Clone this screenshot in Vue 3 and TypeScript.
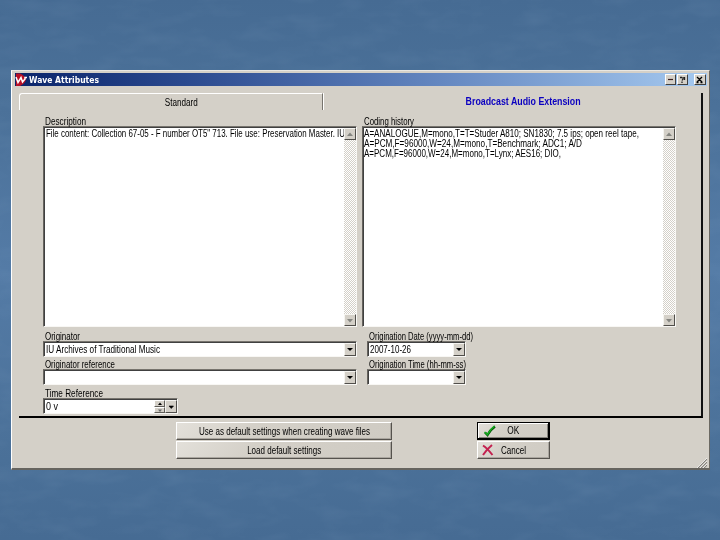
<script setup lang="ts">
import type { Directive } from 'vue'

// Condenses a label horizontally so that it occupies the given width.
const vFit: Directive<HTMLElement, number> = {
  mounted(el, binding) {
    const natural = el.getBoundingClientRect().width
    if (natural > 0) el.style.transform = `scaleX(${binding.value / natural})`
  },
}

interface Line { text: string; width: number }
interface Memo { id: string; label: string; labelWidth: number; lines: Line[] }

const memos: Memo[] = [
  {
    id: 'description', label: 'Description', labelWidth: 41,
    lines: [{ text: 'File content: Collection 67-05 - F number OT5" 713. File use: Preservation Master. IU', width: 299 }],
  },
  {
    id: 'history', label: 'Coding history', labelWidth: 50,
    lines: [
      { text: 'A=ANALOGUE,M=mono,T=T=Studer A810; SN1830; 7.5 ips; open reel tape,', width: 275 },
      { text: 'A=PCM,F=96000,W=24,M=mono,T=Benchmark; ADC1; A/D', width: 218 },
      { text: 'A=PCM,F=96000,W=24,M=mono,T=Lynx; AES16; DIO,', width: 197 },
    ],
  },
]

const rows = [
  [
    { label: 'Originator', labelWidth: 35, value: 'IU Archives of Traditional Music', width: 114 },
    { label: 'Origination Date (yyyy-mm-dd)', labelWidth: 104, value: '2007-10-26', width: 41 },
  ],
  [
    { label: 'Originator reference', labelWidth: 70, value: '', width: 0 },
    { label: 'Origination Time (hh-mm-ss)', labelWidth: 97, value: '', width: 0 },
  ],
]
</script>

<template>
  <div class="desktop">
    <svg class="texture" width="720" height="540">
      <filter id="grain" x="0" y="0" width="100%" height="100%">
        <feTurbulence type="fractalNoise" baseFrequency="0.025 0.06" numOctaves="3" seed="8" />
        <feColorMatrix values="0 0 0 0 0.7  0 0 0 0 0.85  0 0 0 0 1  0.65 0 0 0 -0.27" />
      </filter>
      <rect width="720" height="540" filter="url(#grain)" opacity="0.16" />
    </svg>
    <section class="window">
      <header class="titlebar">
        <svg class="logo" viewBox="0 0 12 13">
          <path d="M1 0.500H5Q10.500 3 11 6.500Q10.500 10 5 13H1Z" fill="#b80f25" />
          <path d="M1 4L3 9.500L6 4.500L7.500 9L10 6V4.500H12" fill="none" stroke="#fff" stroke-width="1.500" />
        </svg>
        <span class="title"><span v-fit="70" class="t">Wave Attributes</span></span>
        <button class="cap"><svg viewBox="0 0 9 9"><path d="M2 4.500H7" stroke="#3c2020" stroke-width="1.200" /></svg></button>
        <button class="cap"><svg viewBox="0 0 9 9"><path d="M2 2.500H4M5 2V4L4 5.500M4 6.500V8M6.500 2V5" fill="none" stroke="#222" stroke-width="1.300" /></svg></button>
        <button class="cap close"><svg viewBox="0 0 9 9"><path d="M2 2L7 7M7 2L2 7M1.500 7.500H3.500M5.500 7.500H7.500" stroke="#000" stroke-width="1.300" /></svg></button>
      </header>

      <main class="panel">
        <nav class="tabs">
          <div class="tab standard"><span v-fit="33" class="t mid">Standard</span></div>
          <div class="tab active"><span v-fit="115" class="t mid">Broadcast Audio Extension</span></div>
        </nav>
        <div class="memos">
          <div v-for="memo in memos" :key="memo.id" class="memo-col">
            <div class="label"><span v-fit="memo.labelWidth" class="t">{{ memo.label }}</span></div>
            <div class="memo sunken">
              <div class="lines">
                <div v-for="line in memo.lines" :key="line.text" class="line"><span v-fit="line.width" class="t">{{ line.text }}</span></div>
              </div>
              <div class="scroll">
                <i class="arrow-btn"><svg viewBox="0 0 10 10"><path d="M2 7L5 3.500L8 7Z" fill="#858580" /></svg></i>
                <i class="arrow-btn"><svg viewBox="0 0 10 10"><path d="M2 4H8L5 7.500Z" fill="#858580" /></svg></i>
              </div>
            </div>
          </div>
        </div>
        <div v-for="(row, r) in rows" :key="r" class="row">
          <div v-for="field in row" :key="field.label" class="field">
            <div class="label"><span v-fit="field.labelWidth" class="t">{{ field.label }}</span></div>
            <div class="combo sunken">
              <div class="value"><span v-if="field.value" v-fit="field.width" class="t">{{ field.value }}</span></div>
              <i class="arrow-btn"><svg viewBox="0 0 10 10"><path d="M2 4H8L5 7Z" fill="#000" /></svg></i>
            </div>
          </div>
        </div>
        <div class="time">
          <div class="label"><span v-fit="58" class="t">Time Reference</span></div>
          <div class="combo sunken">
            <div class="value"><span v-fit="12" class="t">0 v</span></div>
            <div class="spin">
              <i><svg viewBox="0 0 9 5"><path d="M3 4L5 1.500L7 4Z" /></svg></i>
              <i><svg viewBox="0 0 9 5"><path d="M3 1.500H7L5 4Z" fill="#666" /></svg></i>
            </div>
            <i class="arrow-btn"><svg viewBox="0 0 10 10"><path d="M3 5H7.500L5.250 7.500Z" fill="#000" stroke="#000" stroke-width=".6" /></svg></i>
          </div>
        </div>
      </main>

      <footer class="footer">
        <div class="stack wide">
          <button class="btn"><span v-fit="171" class="t mid">Use as default settings when creating wave files</span></button>
          <button class="btn"><span v-fit="74" class="t mid">Load default settings</span></button>
        </div>
        <div class="stack narrow">
          <button class="btn default">
            <svg class="mark" viewBox="0 0 14 14"><path d="M2 8.500L4.500 11Q7 6 12 2.500" fill="none" stroke="#075c0b" stroke-width="2.400" /><path d="M1.500 8L4.500 10.500Q7 5.500 11.500 2" fill="none" stroke="#16ae20" stroke-width="1.500" /></svg>
            <span v-fit="12" class="t mid">OK</span>
          </button>
          <button class="btn">
            <svg class="mark cross" viewBox="0 0 14 14"><path d="M2 2.500Q6 5 11.500 12M11 2Q6 6 2 12" fill="none" stroke="#c3214f" stroke-width="2" /></svg>
            <span v-fit="25" class="t mid">Cancel</span>
          </button>
        </div>
        <svg class="grip" viewBox="0 0 10 10"><path d="M1 10L10 1M4 10L10 4M7 10L10 7" stroke="#85827c" stroke-width="1.200" /><path d="M0 10L10 0M3 10L10 3M6 10L10 6" stroke="#fff" stroke-width=".7" /></svg>
      </footer>
    </section>
  </div>
</template>

<style>
body { margin: 0; overflow: hidden; }
</style>

<style scoped>
* { box-sizing: border-box; }
.desktop { position: relative; width: 720px; height: 540px; padding: 70px 10px 0 11px; background: linear-gradient(#466b93, #4b7199 20%, #547ba6 50%, #4b7199 82%, #466b93); font: 10px/10px "Liberation Sans", Arial, sans-serif; color: #000; }
.texture { position: absolute; inset: 0; }
.window { position: relative; width: 699px; height: 400px; padding: 2px 2px 0 3px; background: #d4d0c8; border: 1px solid #e9e7e2; border-right-color: #6b6963; border-bottom: 2px solid #66645f; border-left-color: #fff; display: flex; flex-direction: column; }
.t { display: inline-block; white-space: nowrap; transform-origin: left center; }
.mid { transform-origin: center; }
svg { display: block; }
button { font: inherit; color: inherit; padding: 0; border-radius: 0; }

.titlebar { height: 13px; display: flex; align-items: center; background: linear-gradient(90deg, #0a246a, #2b4a8f 25%, #6588c1 62%, #a6caf0); padding-right: 1px; }
.logo { width: 12px; height: 13px; }
.title { flex: 1; padding-left: 2px; color: #fff; font: bold 8.5px/12px "DejaVu Sans", sans-serif; }
.cap { width: 11px; height: 11px; margin-left: 1px; background: #d4d0c8; border: 1px solid; border-color: #fff #404040 #404040 #fff; }
.cap svg { width: 9px; height: 9px; }
.close { width: 12px; margin-left: 6px; }

.panel { margin: 7px 4px 0 4px; height: 325px; border-right: 2px solid #111; border-bottom: 2px solid #000; display: flex; flex-direction: column; padding-right: 25px; }
.tabs { display: flex; flex: none; height: 23px; margin-right: -25px; }
.tab { height: 17px; display: flex; align-items: center; justify-content: center; }
.standard { width: 304px; padding: 1px 0 0 20px; border-top: 1px solid #fff; border-left: 1px solid #fff; border-right: 1px solid #77746e; border-top-left-radius: 3px; box-shadow: 1px 0 #fff; }
.active { flex: 1; padding: 1px 0 0 23px; font-weight: bold; color: #0b00c0; }

.label { height: 10px; line-height: 12px; padding-left: 2px; }
.sunken { background: #fff; border: 1px solid; border-color: #77746e #f8f7f4 #f8f7f4 #66635e; box-shadow: inset 1px 1px #404040; }
.memos { display: flex; gap: 5px; padding-left: 24px; }
.memo-col { width: 314px; }
.memo { height: 201px; display: flex; padding: 1px 0 0 1px; }
.lines { flex: 1; min-width: 0; padding: 1px 0 0 1px; overflow: hidden; }
.line { height: 9.8px; line-height: 9.8px; white-space: nowrap; }
.memo-col:last-child .lines { padding-left: 0; }
.scroll { width: 12px; display: flex; flex-direction: column; justify-content: space-between; background: repeating-conic-gradient(#d4d0c8 0 25%, #fff 0 50%) 0 0 / 2px 2px; }
.arrow-btn { display: block; flex: none; width: 12px; height: 12px; background: #d4d0c8; border: 1px solid; border-color: #f5f4f0 #504e4a #504e4a #f5f4f0; }
.arrow-btn svg { width: 10px; height: 10px; }

.row { display: flex; flex: none; gap: 10px; padding: 4px 0 0 24px; height: 30px; }
.row + .row { padding-top: 2px; height: 28px; }
.field:first-child { width: 314px; }
.field:last-child { width: 99px; }
.combo { height: 16px; display: flex; padding: 1px 0 0 1px; }
.value { flex: 1; min-width: 0; padding: 2px 0 0 1px; }
.combo .arrow-btn { height: 13px; }
.time { width: 159px; padding: 3px 0 0 24px; }
.spin { width: 11px; display: flex; flex-direction: column; }
.spin i { height: 6.500px; background: #d4d0c8; border: 1px solid; border-color: #fff #605e59 #605e59 #fff; }
.spin svg { width: 9px; height: 5px; }

.footer { position: relative; display: flex; padding: 4px 0 0 161px; flex: 1; }
.stack { display: flex; flex-direction: column; gap: 1px; }
.wide { width: 216px; }
.narrow { width: 73px; margin-left: 85px; }
.btn { position: relative; height: 18px; line-height: 10px; display: flex; align-items: center; justify-content: center; padding-top: 1px; background: linear-gradient(135deg, #e3e0da, #d4d0c8 35%, #cfcbc3); border: 1px solid; border-color: #fff #55524d #55524d #fff; box-shadow: inset -1px -1px #aaa69f; }
.default { border: 1px solid #000; border-width: 1px 2px 2px 1px; box-shadow: inset 1px 1px #fff, inset -1px -1px #85827c; }
.mark { position: absolute; left: 5px; top: 1px; width: 14px; height: 14px; }
.cross { left: 3px; }
.grip { position: absolute; right: 0; bottom: 0; width: 10px; height: 10px; }
</style>
